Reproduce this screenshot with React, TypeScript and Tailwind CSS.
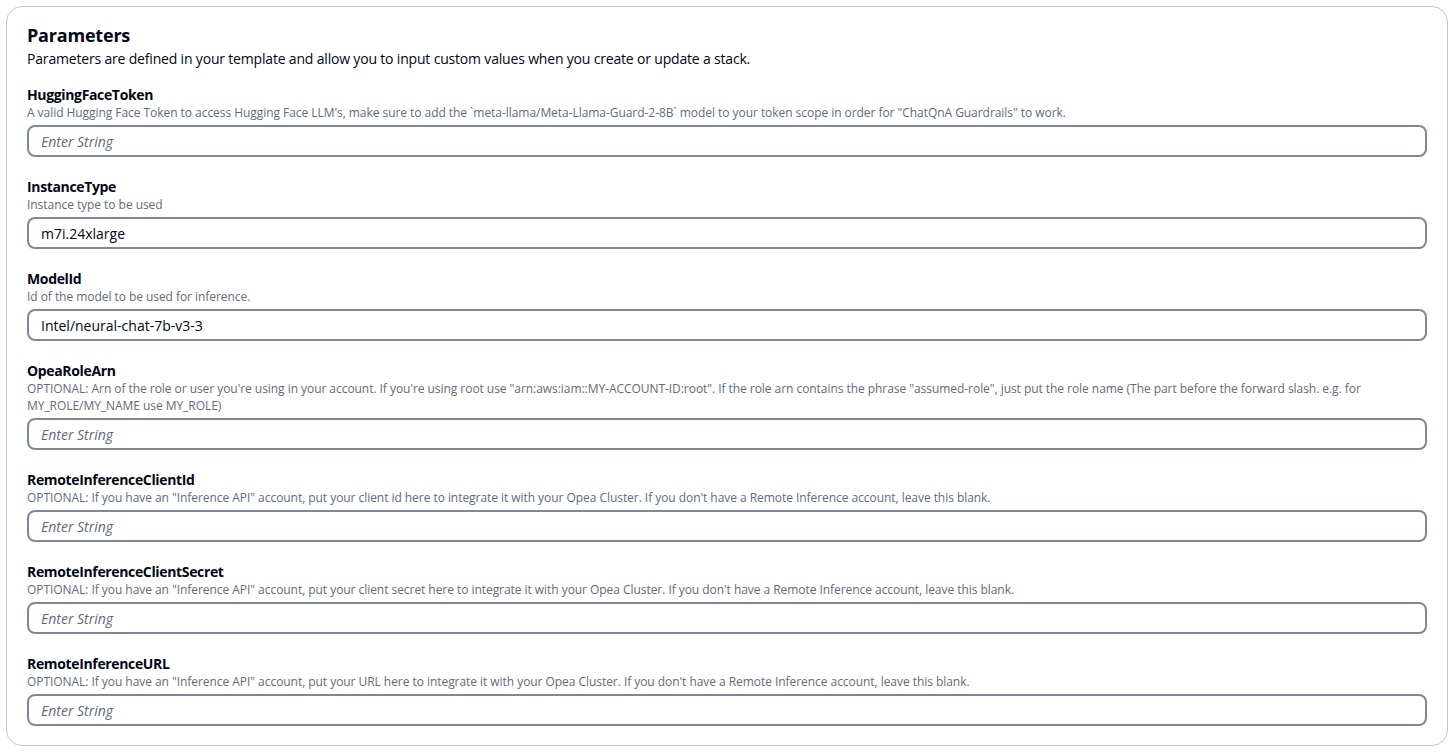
import React from "react";

type Field = {
  name: string;
  help: React.ReactNode;
  value?: string;
};

const fields: Field[] = [
  {
    name: "HuggingFaceToken",
    help: 'A valid Hugging Face Token to access Hugging Face LLM\'s, make sure to add the `meta-llama/Meta-Llama-Guard-2-8B` model to your token scope in order for "ChatQnA Guardrails" to work.',
  },
  { name: "InstanceType", help: "Instance type to be used", value: "m7i.24xlarge" },
  { name: "ModelId", help: "Id of the model to be used for inference.", value: "Intel/neural-chat-7b-v3-3" },
  {
    name: "OpeaRoleArn",
    help: (
      <>
        OPTIONAL: Arn of the role or user you're using in your account. If you're using root use
        "arn:aws:iam::MY-ACCOUNT-ID:root". If the role arn contains the phrase "assumed-role", just put the
        role name (The part before the forward slash. e.g. for
        <br />
        MY_ROLE/MY_NAME use MY_ROLE)
      </>
    ),
  },
  {
    name: "RemoteInferenceClientId",
    help: 'OPTIONAL: If you have an "Inference API" account, put your client id here to integrate it with your Opea Cluster. If you don\'t have a Remote Inference account, leave this blank.',
  },
  {
    name: "RemoteInferenceClientSecret",
    help: 'OPTIONAL: If you have an "Inference API" account, put your client secret here to integrate it with your Opea Cluster. If you don\'t have a Remote Inference account, leave this blank.',
  },
  {
    name: "RemoteInferenceURL",
    help: 'OPTIONAL: If you have an "Inference API" account, put your URL here to integrate it with your Opea Cluster. If you don\'t have a Remote Inference account, leave this blank.',
  },
];

const App = () => {
  return (
    <div className="min-h-screen bg-white pt-[6px] font-['Open_Sans',sans-serif] text-[#000716]">
      <section className="ml-[6px] mr-[4px] rounded-[16px] border border-[#c6c6cd] px-[20px] pt-[16px] pb-[19px]">
        <h1 className="text-[18px] font-bold leading-[24px] tracking-[-0.2px]">Parameters</h1>
        <p className="mt-[2px] text-[14px] leading-[20px] tracking-[-0.18px]">
          Parameters are defined in your template and allow you to input custom values when you create or update a stack.
        </p>
        <div className="mt-[17px] flex flex-col gap-[21px]">
          {fields.map((f) => (
            <div key={f.name} className="flex flex-col">
              <label className="text-[14px] font-bold leading-[18px] tracking-[-0.35px]">{f.name}</label>
              <div className="text-[12px] leading-[17px] tracking-[-0.05px] text-[#5f6b7a]">{f.help}</div>
              <input
                className="mt-[4px] h-[32px] w-full rounded-[8px] border-2 border-[#7d8998] px-[12px] text-[14px] text-[#000716] outline-none placeholder:italic placeholder:text-[#5f6b7a]"
                placeholder="Enter String"
                defaultValue={f.value}
              />
            </div>
          ))}
        </div>
      </section>
    </div>
  );
};

export default App;
